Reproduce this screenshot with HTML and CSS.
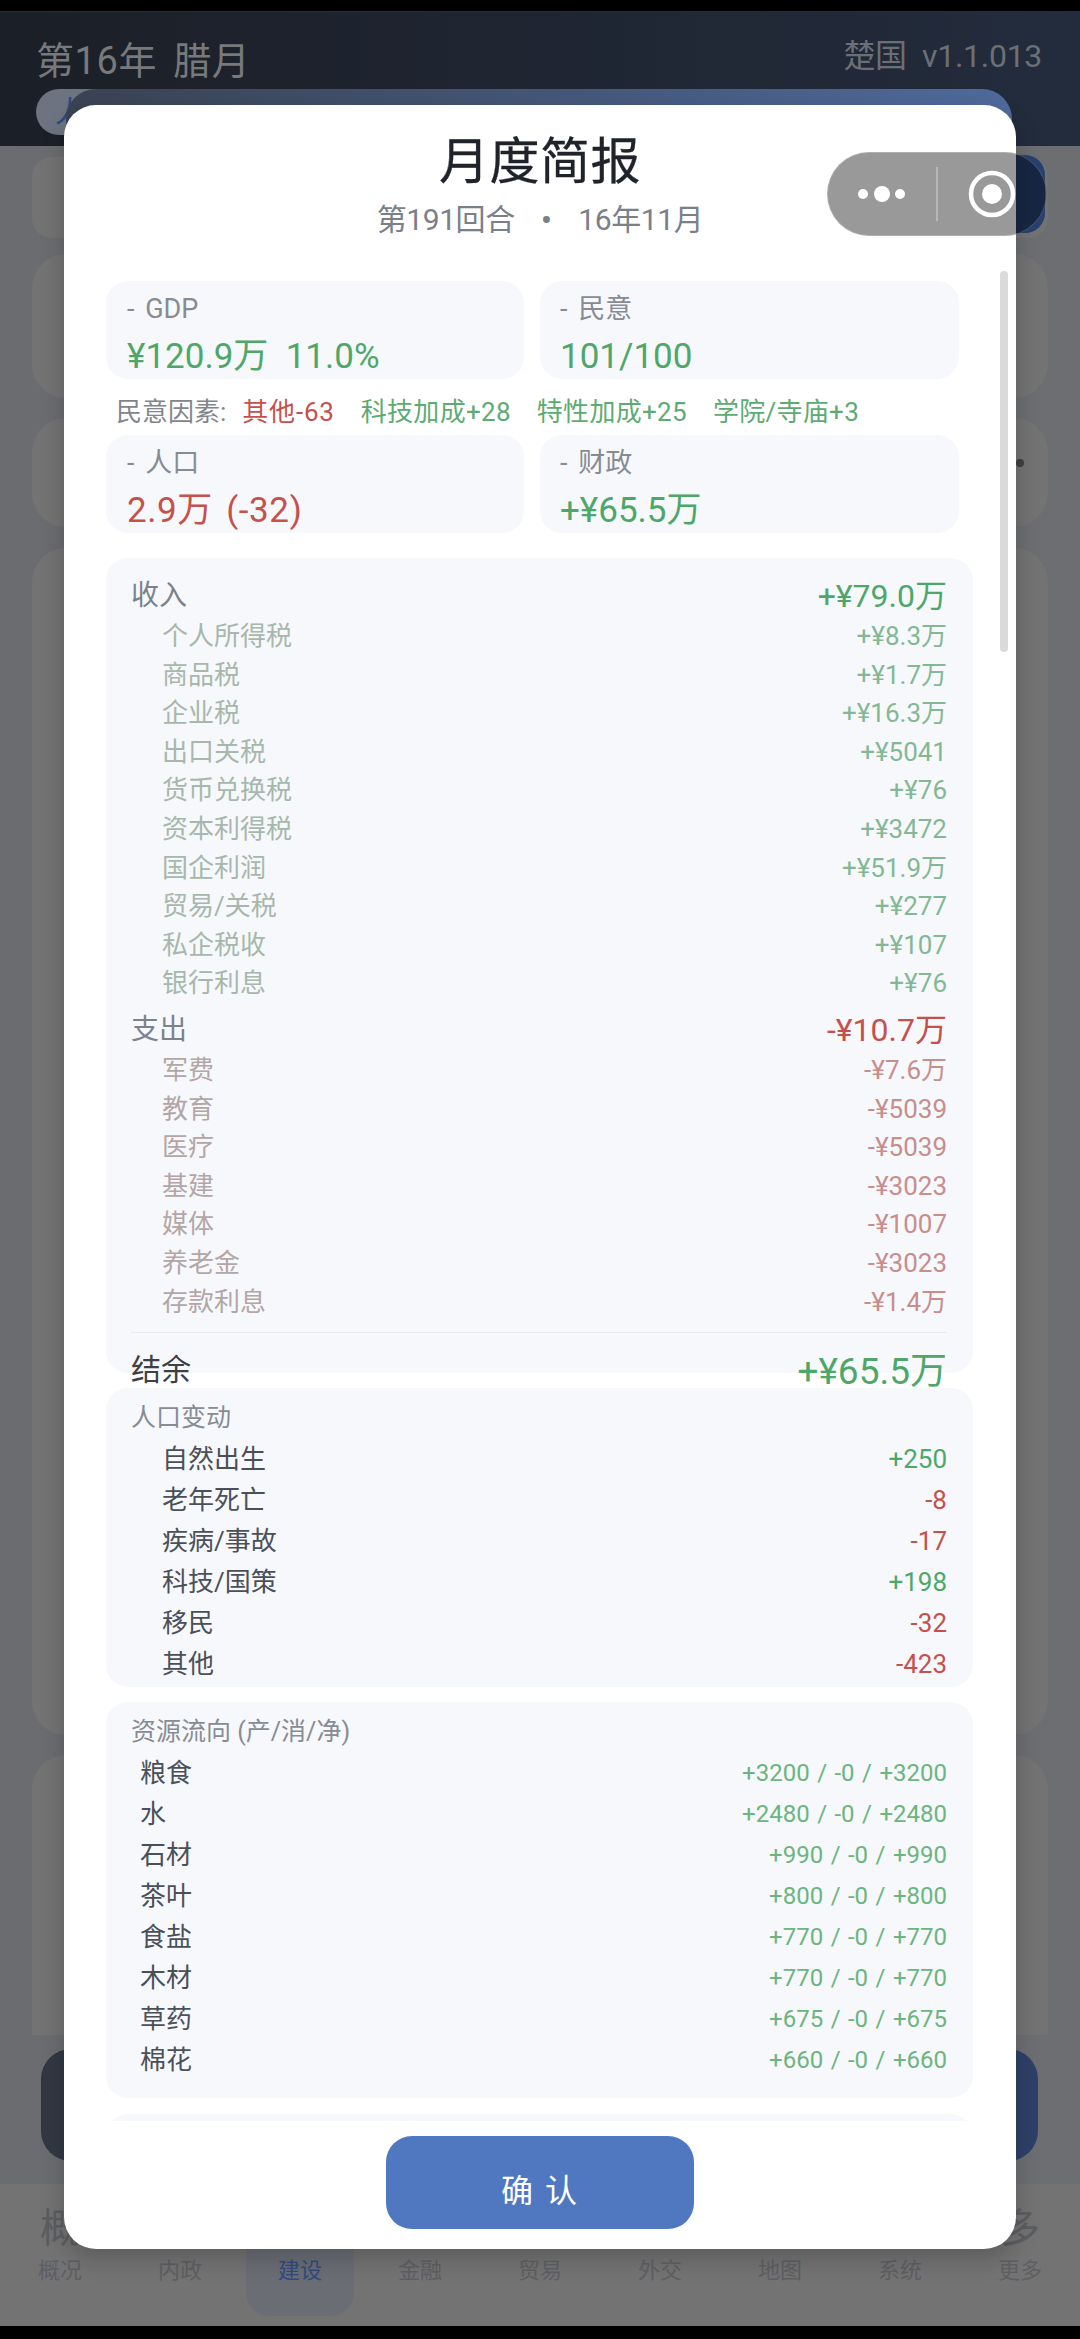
FILE: index.html
```html
<!DOCTYPE html>
<html lang="zh-CN">
<head>
<meta charset="utf-8">
<title>月度简报</title>
<link rel="stylesheet" href="styles.css">
</head>
<body>
<div class="screen">
  <div class="blackbar"></div>
  <header class="topbar">
    <div class="topline">
      <span class="date">第16年 腊月</span>
      <span class="nation">楚国&nbsp; v1.1.013</span>
    </div>
    <div class="pill"><span>人</span></div>
  </header>
  <main class="back">
    <div class="bcard b1"></div>
    <div class="bluebtn"></div>
    <div class="bcard b2"></div>
    <div class="bcard b3"><i class="bdot"></i></div>
    <div class="bcard b4"></div>
    <div class="bcard b6"></div>
    <div class="backbtn"></div>
  </main>
  <nav class="tabs">
    <div class="tab"><b>概</b><span>概况</span></div>
    <div class="tab"><b>内</b><span>内政</span></div>
    <div class="tab active"><b>建</b><span>建设</span></div>
    <div class="tab"><b>金</b><span>金融</span></div>
    <div class="tab"><b>贸</b><span>贸易</span></div>
    <div class="tab"><b>外</b><span>外交</span></div>
    <div class="tab"><b>地</b><span>地图</span></div>
    <div class="tab"><b>系</b><span>系统</span></div>
    <div class="tab"><b>多</b><span>更多</span></div>
  </nav>
  <div class="blackbar bottom"></div>

  <div class="strip"></div>
  <section class="modal">
    <h1 class="title">月度简报</h1>
    <p class="subtitle"><span>第191回合</span><span>•</span><span>16年11月</span></p>
    <div class="scroll">
      <div class="metrics">
        <div class="metric"><div class="mlabel">- GDP</div><div class="mvalue green">¥120.9万&nbsp; 11.0%</div></div>
        <div class="metric"><div class="mlabel">- 民意</div><div class="mvalue green">101/100</div></div>
      </div>
      <div class="factors">
        <span class="flabel">民意因素:</span>
        <span class="red fred">其他-63</span>
        <span class="fgreen">科技加成+28</span>
        <span class="fgreen">特性加成+25</span>
        <span class="fgreen">学院/寺庙+3</span>
      </div>
      <div class="metrics">
        <div class="metric"><div class="mlabel">- 人口</div><div class="mvalue red wide">2.9万 (-32)</div></div>
        <div class="metric"><div class="mlabel">- 财政</div><div class="mvalue green">+¥65.5万</div></div>
      </div>

      <div class="panel budget">
        <div class="head"><span>收入</span><span class="green">+¥79.0万</span></div>
        <div class="row inc"><span>个人所得税</span><span>+¥8.3万</span></div>
        <div class="row inc"><span>商品税</span><span>+¥1.7万</span></div>
        <div class="row inc"><span>企业税</span><span>+¥16.3万</span></div>
        <div class="row inc"><span>出口关税</span><span>+¥5041</span></div>
        <div class="row inc"><span>货币兑换税</span><span>+¥76</span></div>
        <div class="row inc"><span>资本利得税</span><span>+¥3472</span></div>
        <div class="row inc"><span>国企利润</span><span>+¥51.9万</span></div>
        <div class="row inc"><span>贸易/关税</span><span>+¥277</span></div>
        <div class="row inc"><span>私企税收</span><span>+¥107</span></div>
        <div class="row inc"><span>银行利息</span><span>+¥76</span></div>
        <div class="head second"><span>支出</span><span class="red">-¥10.7万</span></div>
        <div class="row exp"><span>军费</span><span>-¥7.6万</span></div>
        <div class="row exp"><span>教育</span><span>-¥5039</span></div>
        <div class="row exp"><span>医疗</span><span>-¥5039</span></div>
        <div class="row exp"><span>基建</span><span>-¥3023</span></div>
        <div class="row exp"><span>媒体</span><span>-¥1007</span></div>
        <div class="row exp"><span>养老金</span><span>-¥3023</span></div>
        <div class="row exp"><span>存款利息</span><span>-¥1.4万</span></div>
        <div class="total"><span>结余</span><span class="green">+¥65.5万</span></div>
      </div>

      <div class="panel people">
        <div class="ptitle">人口变动</div>
        <div class="prow"><span>自然出生</span><span class="green">+250</span></div>
        <div class="prow"><span>老年死亡</span><span class="red">-8</span></div>
        <div class="prow"><span>疾病/事故</span><span class="red">-17</span></div>
        <div class="prow"><span>科技/国策</span><span class="green">+198</span></div>
        <div class="prow"><span>移民</span><span class="red">-32</span></div>
        <div class="prow"><span>其他</span><span class="red">-423</span></div>
      </div>

      <div class="panel flows">
        <div class="ptitle">资源流向 (产/消/净)</div>
        <div class="frow"><span>粮食</span><span>+3200 / -0 / +3200</span></div>
        <div class="frow"><span>水</span><span>+2480 / -0 / +2480</span></div>
        <div class="frow"><span>石材</span><span>+990 / -0 / +990</span></div>
        <div class="frow"><span>茶叶</span><span>+800 / -0 / +800</span></div>
        <div class="frow"><span>食盐</span><span>+770 / -0 / +770</span></div>
        <div class="frow"><span>木材</span><span>+770 / -0 / +770</span></div>
        <div class="frow"><span>草药</span><span>+675 / -0 / +675</span></div>
        <div class="frow"><span>棉花</span><span>+660 / -0 / +660</span></div>
      </div>

      <div class="panel tail"></div>
    </div>
    <div class="scrollbar"></div>
    <div class="footer"><button class="confirm">确 认</button></div>
  </section>

  <div class="capsule">
    <svg class="cdots" width="76" height="20" viewBox="0 0 76 20"><circle cx="11" cy="10" r="5" fill="#fff"/><circle cx="30" cy="10" r="8" fill="#fff"/><circle cx="48" cy="10" r="5" fill="#fff"/></svg>
    <i class="cdiv"></i>
    <svg class="cring" width="48" height="48" viewBox="0 0 48 48"><circle cx="24" cy="24" r="21" fill="none" stroke="#fff" stroke-width="4.5"/><circle cx="24" cy="24" r="10" fill="#fff"/></svg>
  </div>
</div>
</body>
</html>
```
FILE: styles.css
```css
* { box-sizing: border-box; }
html, body { margin: 0; padding: 0; background: #000; }
body { font-family: Roboto, "Noto Sans CJK SC", sans-serif; }
.screen { position: relative; width: 1080px; height: 2339px; overflow: hidden; display: flex; flex-direction: column; background: #6b6d71; }

.blackbar { height: 12px; flex: none; background: #000; border-bottom: 1px solid #2a2c30; }
.blackbar.bottom { flex: 1; border: 0; }

.topbar { flex: none; height: 134px; background: linear-gradient(90deg, #1b1f27, #232c3d); padding: 21px 38px 0 36px; }
.topline { display: flex; justify-content: space-between; align-items: flex-start; height: 56px; }
.date { font-size: 38px; line-height: 56px; color: #77797c; letter-spacing: 0.6px; word-spacing: 6px; }
.nation { font-size: 32px; line-height: 46px; color: #6b6f76; letter-spacing: -0.3px; }
.pill { width: 120px; height: 46px; border-radius: 23px; background: #6d7380; padding-left: 19px; color: #2c4a80; font-size: 30px; line-height: 46px; }

.back { flex: none; height: 2038px; padding: 11px 32px 0; display: flex; flex-direction: column; background: linear-gradient(90deg, #6a6c70, #6c6e72); position: relative; }
.bluebtn { position: absolute; left: 930px; top: 9px; width: 115px; height: 78px; border-radius: 20px; background: #27406f; }
.bcard { background: #737373; border-radius: 34px; flex: none; position: relative; }
.b1 { height: 81px; border-radius: 20px; }
.b2 { height: 144px; margin-top: 16px; }
.b3 { height: 109px; margin-top: 20px; }
.b4 { height: 1187px; margin-top: 21px; }
.b6 { height: 280px; margin-top: 20px; border-radius: 34px 34px 0 0; }
.bdot { position: absolute; right: 24px; top: 41px; width: 8px; height: 8px; border-radius: 50%; background: #3f4043; }
.backbtn { height: 112px; margin: 14px 10px 0 9px; border-radius: 30px; background: linear-gradient(90deg, #323843, #2e4068); }

.tabs { flex: none; height: 142px; display: flex; background: #737373; }
.tab { flex: 1; position: relative; display: flex; flex-direction: column; align-items: center; padding-top: 22px; color: #5d5f63; }
.tab b { font-weight: 400; font-size: 40px; line-height: 46px; color: #5b5d60; }
.tab span { font-size: 22px; line-height: 30px; margin-top: 4px; }
.tab.active span { color: #2f4a80; }
.tab.active::before { content: ""; position: absolute; left: 6px; right: 6px; top: 0; bottom: 10px; border-radius: 24px; background: #6a6d74; }
.tab.active b, .tab.active span { position: relative; }

.strip { position: absolute; left: 66px; top: 89px; width: 946px; height: 40px; border-radius: 30px 30px 0 0; background: linear-gradient(90deg, #3a4353, #4f6a9c); }

.modal { position: absolute; left: 64px; top: 105px; width: 952px; height: 2144px; background: #fff; border-radius: 32px; box-shadow: 0 10px 24px rgba(0,0,0,.2); display: flex; flex-direction: column; }
.title { margin: 0; padding-top: 27px; text-align: center; font-size: 50px; line-height: 60px; font-weight: 400; color: #20242a; letter-spacing: 0.5px; -webkit-text-stroke: 0.3px #20242a; }
.subtitle { margin: 8px 0 0; display: flex; justify-content: center; gap: 26px; font-size: 30px; line-height: 40px; color: #7a8089; }
.subtitle span:nth-child(2) { font-size: 34px; }
.subtitle span:nth-child(2n+1) { letter-spacing: -0.4px; }
.scroll { margin: 31px 0 0 42px; width: 867px; height: 1850px; overflow: hidden; padding-top: 10px; flex: none; }

.metrics { display: grid; grid-template-columns: 418px 419px; gap: 16px; }
.metric { height: 98px; background: #f6f8fc; border-radius: 22px; padding: 10px 21px 0; }
.metric + .metric { padding-left: 20px; }
.mlabel { font-size: 27px; line-height: 36px; color: #878c94; word-spacing: 4px; }
.mvalue { font-size: 35px; line-height: 48px; margin-top: 6px; }
.mvalue.wide { word-spacing: 4px; letter-spacing: 0.6px; }
.green { color: #4ea768; }
.red { color: #c6504b; }
.fgreen { color: #5dab72; letter-spacing: 0.3px; }
.fred { letter-spacing: 0.8px; }
.factors { height: 56px; padding: 4px 0 0 10px; display: flex; align-items: center; gap: 26px; font-size: 26px; }
.flabel { color: #81868e; margin-right: -10px; }

.panel { background: #f6f8fc; border-radius: 22px; padding: 0 26px 0 25px; margin-top: 15px; }
.budget { height: 815px; margin-top: 25px; padding-top: 17px; }
.head { display: flex; justify-content: space-between; height: 42px; line-height: 42px; font-size: 28px; color: #7d828a; }
.head span:last-child { font-size: 32px; }
.head.second { margin-top: 6px; }
.row { display: flex; justify-content: space-between; padding-left: 31px; height: 38.6px; line-height: 38.6px; font-size: 26px; }
.row.inc span:first-child { color: #a8b7ab; }
.row.inc span:last-child { color: #84b894; }
.row.exp span:first-child { color: #b4a6a6; }
.row.exp span:last-child { color: #c78e8c; }
.total { display: flex; justify-content: space-between; align-items: center; height: 68px; margin-top: 11px; border-top: 1px solid #e8eaee; font-size: 30px; color: #3c4148; }
.total .green { font-size: 37px; line-height: 50px; padding-top: 10px; }

.people { padding-top: 13px; padding-bottom: 2.5px; }
.flows { padding-top: 13px; padding-bottom: 17.5px; }
.ptitle { font-size: 25px; line-height: 34px; color: #878c94; margin-bottom: 3.5px; }
.prow { display: flex; justify-content: space-between; padding-left: 31px; height: 41px; line-height: 41px; font-size: 26px; color: #4b5058; }
.frow { display: flex; justify-content: space-between; padding-left: 9px; height: 41px; line-height: 41px; font-size: 26px; color: #4b5058; }
.frow span:last-child { font-size: 24px; color: #6cb57e; word-spacing: 1.5px; }
.tail { height: 60px; margin-top: 16px; }

.scrollbar { position: absolute; left: 936px; top: 166px; width: 8px; height: 381px; border-radius: 4px; background: #dadada; }
.footer { flex: 1; display: flex; justify-content: center; padding-top: 15px; }
.confirm { width: 308px; height: 93px; border: 0; border-radius: 26px; background: #4f78c1; color: #fff; font-family: inherit; font-size: 32px; letter-spacing: 2px; padding: 10px 0 0; }

.capsule { position: absolute; left: 827px; top: 152px; width: 220px; height: 84px; border-radius: 42px; background: rgba(0,0,0,.4); border: 1px solid rgba(255,255,255,.2); }
.cdots { position: absolute; left: 24px; top: 31px; }
.cdiv { position: absolute; left: 108px; top: 14px; width: 2px; height: 54px; background: rgba(255,255,255,.3); }
.cring { position: absolute; left: 140px; top: 17px; }
```
